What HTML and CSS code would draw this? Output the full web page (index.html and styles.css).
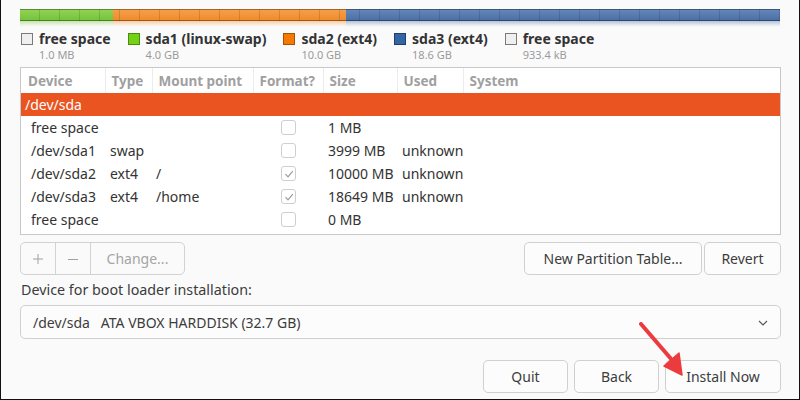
FILE: index.html
```html
<!DOCTYPE html>
<html>
<head>
<meta charset="utf-8">
<link rel="stylesheet" href="styles.css">
</head>
<body>
<div class="page">
  <div class="bar-wrap">
    <div class="bar">
      <div class="seg seg-free1"></div>
      <div class="seg seg-swap"></div>
      <div class="seg seg-ext4a"></div>
      <div class="seg seg-ext4b"></div>
      <div class="seg seg-free2"></div>
    </div>
    <div class="bar reflect">
      <div class="seg seg-free1"></div>
      <div class="seg seg-swap"></div>
      <div class="seg seg-ext4a"></div>
      <div class="seg seg-ext4b"></div>
      <div class="seg seg-free2"></div>
    </div>
  </div>

  <div class="legend">
    <div class="legend-item">
      <span class="swatch sw-free"></span>
      <div class="legend-text"><div class="legend-name">free space</div><div class="legend-size">1.0 MB</div></div>
    </div>
    <div class="legend-item">
      <span class="swatch sw-swap"></span>
      <div class="legend-text"><div class="legend-name">sda1 (linux-swap)</div><div class="legend-size">4.0 GB</div></div>
    </div>
    <div class="legend-item">
      <span class="swatch sw-ext4a"></span>
      <div class="legend-text"><div class="legend-name">sda2 (ext4)</div><div class="legend-size">10.0 GB</div></div>
    </div>
    <div class="legend-item">
      <span class="swatch sw-ext4b"></span>
      <div class="legend-text"><div class="legend-name">sda3 (ext4)</div><div class="legend-size">18.6 GB</div></div>
    </div>
    <div class="legend-item">
      <span class="swatch sw-free"></span>
      <div class="legend-text"><div class="legend-name">free space</div><div class="legend-size">933.4 kB</div></div>
    </div>
  </div>

  <div class="table-box">
    <table class="ptable">
      <colgroup>
        <col class="c-dev"><col class="c-type"><col class="c-mount"><col class="c-fmt"><col class="c-size"><col class="c-used"><col class="c-sys">
      </colgroup>
      <thead>
        <tr>
          <th class="first">Device</th><th>Type</th><th>Mount point</th><th>Format?</th><th>Size</th><th>Used</th><th class="last">System</th>
        </tr>
      </thead>
      <tbody>
        <tr class="disk"><td colspan="7">/dev/sda</td></tr>
        <tr>
          <td class="first">free space</td><td></td><td></td>
          <td class="fmt"><span class="check"></span></td>
          <td>1 MB</td><td></td><td></td>
        </tr>
        <tr>
          <td class="first">/dev/sda1</td><td>swap</td><td></td>
          <td class="fmt"><span class="check"></span></td>
          <td>3999 MB</td><td>unknown</td><td></td>
        </tr>
        <tr>
          <td class="first">/dev/sda2</td><td>ext4</td><td class="mnt">/</td>
          <td class="fmt"><span class="check"><svg viewBox="0 0 14 14" width="14" height="14"><polyline points="3.5,7.2 6,9.8 10.8,4.2" fill="none" stroke="#9b9b9b" stroke-width="1.2"/></svg></span></td>
          <td>10000 MB</td><td>unknown</td><td></td>
        </tr>
        <tr>
          <td class="first">/dev/sda3</td><td>ext4</td><td class="mnt">/home</td>
          <td class="fmt"><span class="check"><svg viewBox="0 0 14 14" width="14" height="14"><polyline points="3.5,7.2 6,9.8 10.8,4.2" fill="none" stroke="#9b9b9b" stroke-width="1.2"/></svg></span></td>
          <td>18649 MB</td><td>unknown</td><td></td>
        </tr>
        <tr>
          <td class="first">free space</td><td></td><td></td>
          <td class="fmt"><span class="check"></span></td>
          <td>0 MB</td><td></td><td></td>
        </tr>
      </tbody>
    </table>
  </div>

  <div class="actions">
    <div class="btn-group">
      <span class="gbtn icon-btn"><svg viewBox="0 0 12 12" width="12" height="12"><path d="M6 1V11M1 6H11" stroke="#a0a0a0" stroke-width="1" fill="none"/></svg></span>
      <span class="gbtn icon-btn"><svg viewBox="0 0 12 12" width="12" height="12"><path d="M1 6.5H11" stroke="#a0a0a0" stroke-width="1" fill="none"/></svg></span>
      <span class="gbtn change">Change...</span>
    </div>
    <div class="right-btns">
      <span class="btn btn-npt">New Partition Table...</span>
      <span class="btn btn-revert">Revert</span>
    </div>
  </div>

  <div class="boot-label">Device for boot loader installation:</div>
  <div class="combo">
    <span class="combo-text">/dev/sda&nbsp;&nbsp;&nbsp;ATA VBOX HARDDISK (32.7 GB)</span>
    <svg class="chev" viewBox="0 0 10 6" width="10" height="6"><polyline points="1,1 5,5 9,1" fill="none" stroke="#555" stroke-width="1.1"/></svg>
  </div>

  <div class="footer">
    <span class="btn btn-quit">Quit</span>
    <span class="btn btn-back">Back</span>
    <span class="btn btn-install">Install Now</span>
  </div>

  <svg class="arrow" viewBox="0 0 60 60" width="60" height="60">
    <line x1="2" y1="2" x2="33" y2="38" stroke="#ec3b3f" stroke-width="4" stroke-linecap="round"/>
    <polygon points="25,44 40,31 43,53" fill="#ec3b3f" stroke="#ec3b3f" stroke-width="1.5" stroke-linejoin="round"/>
  </svg>
</div>
</body>
</html>
```

FILE: styles.css
```css
* { box-sizing: border-box; }
html, body { margin: 0; padding: 0; }
body {
  width: 800px;
  height: 400px;
  background: #fafafa;
  font-family: "Noto Sans", "DejaVu Sans", sans-serif;
  color: #3c3c3c;
  overflow: hidden;
}
.page {
  position: relative;
  width: 800px;
  height: 400px;
  border-left: 1px solid #111;
  border-right: 1px solid #111;
  border-bottom: 1px solid #111;
  padding: 9px 19px 0 19px;
}

/* partition bar */
.bar-wrap { position: relative; width: 760px; }
.bar {
  display: flex;
  height: 12px;
  position: relative;
}
.bar::after {
  content: "";
  position: absolute;
  inset: 0;
  background-image: repeating-linear-gradient(to right, transparent 0, transparent 19px, rgba(0,0,0,0.13) 19px, rgba(0,0,0,0.13) 20px);
  box-shadow: inset 0 1px 0 rgba(0,0,0,0.35), inset 0 -1px 0 rgba(0,0,0,0.35);
  pointer-events: none;
}
.seg { height: 100%; }
.seg-free1 { width: 0px; }
.seg-swap { width: 93px; background: linear-gradient(#93d455, #73c23a); }
.seg-ext4a { width: 233px; background: linear-gradient(#f6a04a, #ee8a2a); }
.seg-ext4b { width: 434px; background: linear-gradient(#6588bc, #4a6ea3); }
.seg-free2 { width: 0px; }
.reflect {
  height: 6px;
  transform: scaleY(-1);
  opacity: 0.4;
  -webkit-mask-image: linear-gradient(to top, #000, transparent);
  mask-image: linear-gradient(to top, #000, transparent);
}
.reflect::after { box-shadow: none; background-image: none; }

/* legend */
.legend {
  display: flex;
  gap: 17px;
  margin-top: 4px;
  padding-left: 1px;
}
.legend-item { display: flex; align-items: flex-start; gap: 6px; }
.swatch {
  width: 12px;
  height: 12px;
  margin-top: 2px;
  border: 1px solid #777;
  flex: none;
}
.sw-free { background: #efefef; border-color: #7a7a7a; }
.sw-swap { background: #73d216; border-color: #4a8a10; }
.sw-ext4a { background: #f57900; border-color: #a85300; }
.sw-ext4b { background: #3465a4; border-color: #1f3f6a; }
.legend-name { font-size: 14px; font-weight: bold; line-height: 16px; color: #333; }
.legend-size { font-size: 11px; line-height: 14px; color: #9a9a9a; margin-top: 1px; }

/* table */
.table-box {
  margin-top: 5px;
  width: 761px;
  height: 168px;
  background: #fff;
  border: 1px solid #c8c8c8;
}
.ptable {
  border-collapse: collapse;
  table-layout: fixed;
  width: 759px;
  font-size: 14px;
}
.c-dev { width: 84px; }
.c-type { width: 47px; }
.c-mount { width: 101px; }
.c-fmt { width: 70px; }
.c-size { width: 74px; }
.c-used { width: 66px; }
.ptable th {
  height: 25px;
  padding: 0 0 0 6px;
  text-align: left;
  font-weight: bold;
  color: #a0a0a0;
  font-size: 13.5px;
  border-right: 1px solid #ececec;
  white-space: nowrap;
}
.ptable th.first { padding-left: 7px; }
.ptable th.last { border-right: none; }
.ptable td {
  height: 23px;
  padding: 0 0 0 5px;
  white-space: nowrap;
  color: #333;
}
.ptable td.first { padding-left: 10px; }
.ptable td.mnt { padding-left: 4px; }
.ptable tr.disk td {
  background: #e95420;
  color: #fff;
  padding-left: 4px;
  height: 23px;
}
.ptable td.fmt { padding-left: 28px; }
.check {
  display: block;
  width: 15px;
  height: 15px;
  border: 1px solid #cfcfcf;
  border-radius: 3px;
  background: #fff;
  position: relative;
}
.check svg { position: absolute; left: 0; top: 0; }

/* action row */
.actions {
  display: flex;
  justify-content: space-between;
  margin-top: 7px;
  width: 761px;
}
.btn-group {
  display: flex;
  height: 33px;
  border: 1px solid #d2d2d2;
  border-radius: 5px;
  background: #fafafa;
}
.gbtn {
  display: flex;
  align-items: center;
  justify-content: center;
  height: 100%;
  border-right: 1px solid #d2d2d2;
}
.gbtn:last-child { border-right: none; }
.icon-btn { width: 35px; }
.change { width: 93px; color: #a5a5a5; font-size: 14px; }
.right-btns { display: flex; gap: 2px; }
.btn {
  display: flex;
  align-items: center;
  justify-content: center;
  height: 33px;
  border: 1px solid #d0d0d0;
  border-radius: 5px;
  background: #fcfcfc;
  font-size: 14px;
  color: #3c3c3c;
}
.btn-npt { width: 178px; }
.btn-revert { width: 77px; }

.boot-label {
  margin-top: 7px;
  font-size: 14.3px;
  line-height: 16px;
  color: #3c3c3c;
  padding-left: 1px;
}
.combo {
  display: flex;
  align-items: center;
  justify-content: space-between;
  margin-top: 7px;
  width: 761px;
  height: 34px;
  border: 1px solid #d0d0d0;
  border-radius: 5px;
  background: #fcfcfc;
  padding: 0 12px 0 12px;
  font-size: 14px;
}
.chev { margin-top: 1px; }

.footer {
  display: flex;
  justify-content: flex-end;
  gap: 6px;
  margin-top: 21px;
  width: 761px;
}
.btn-quit { width: 85px; }
.btn-back { width: 85px; }
.btn-install { width: 116px; }

.arrow {
  position: absolute;
  left: 638px;
  top: 322px;
}
```
